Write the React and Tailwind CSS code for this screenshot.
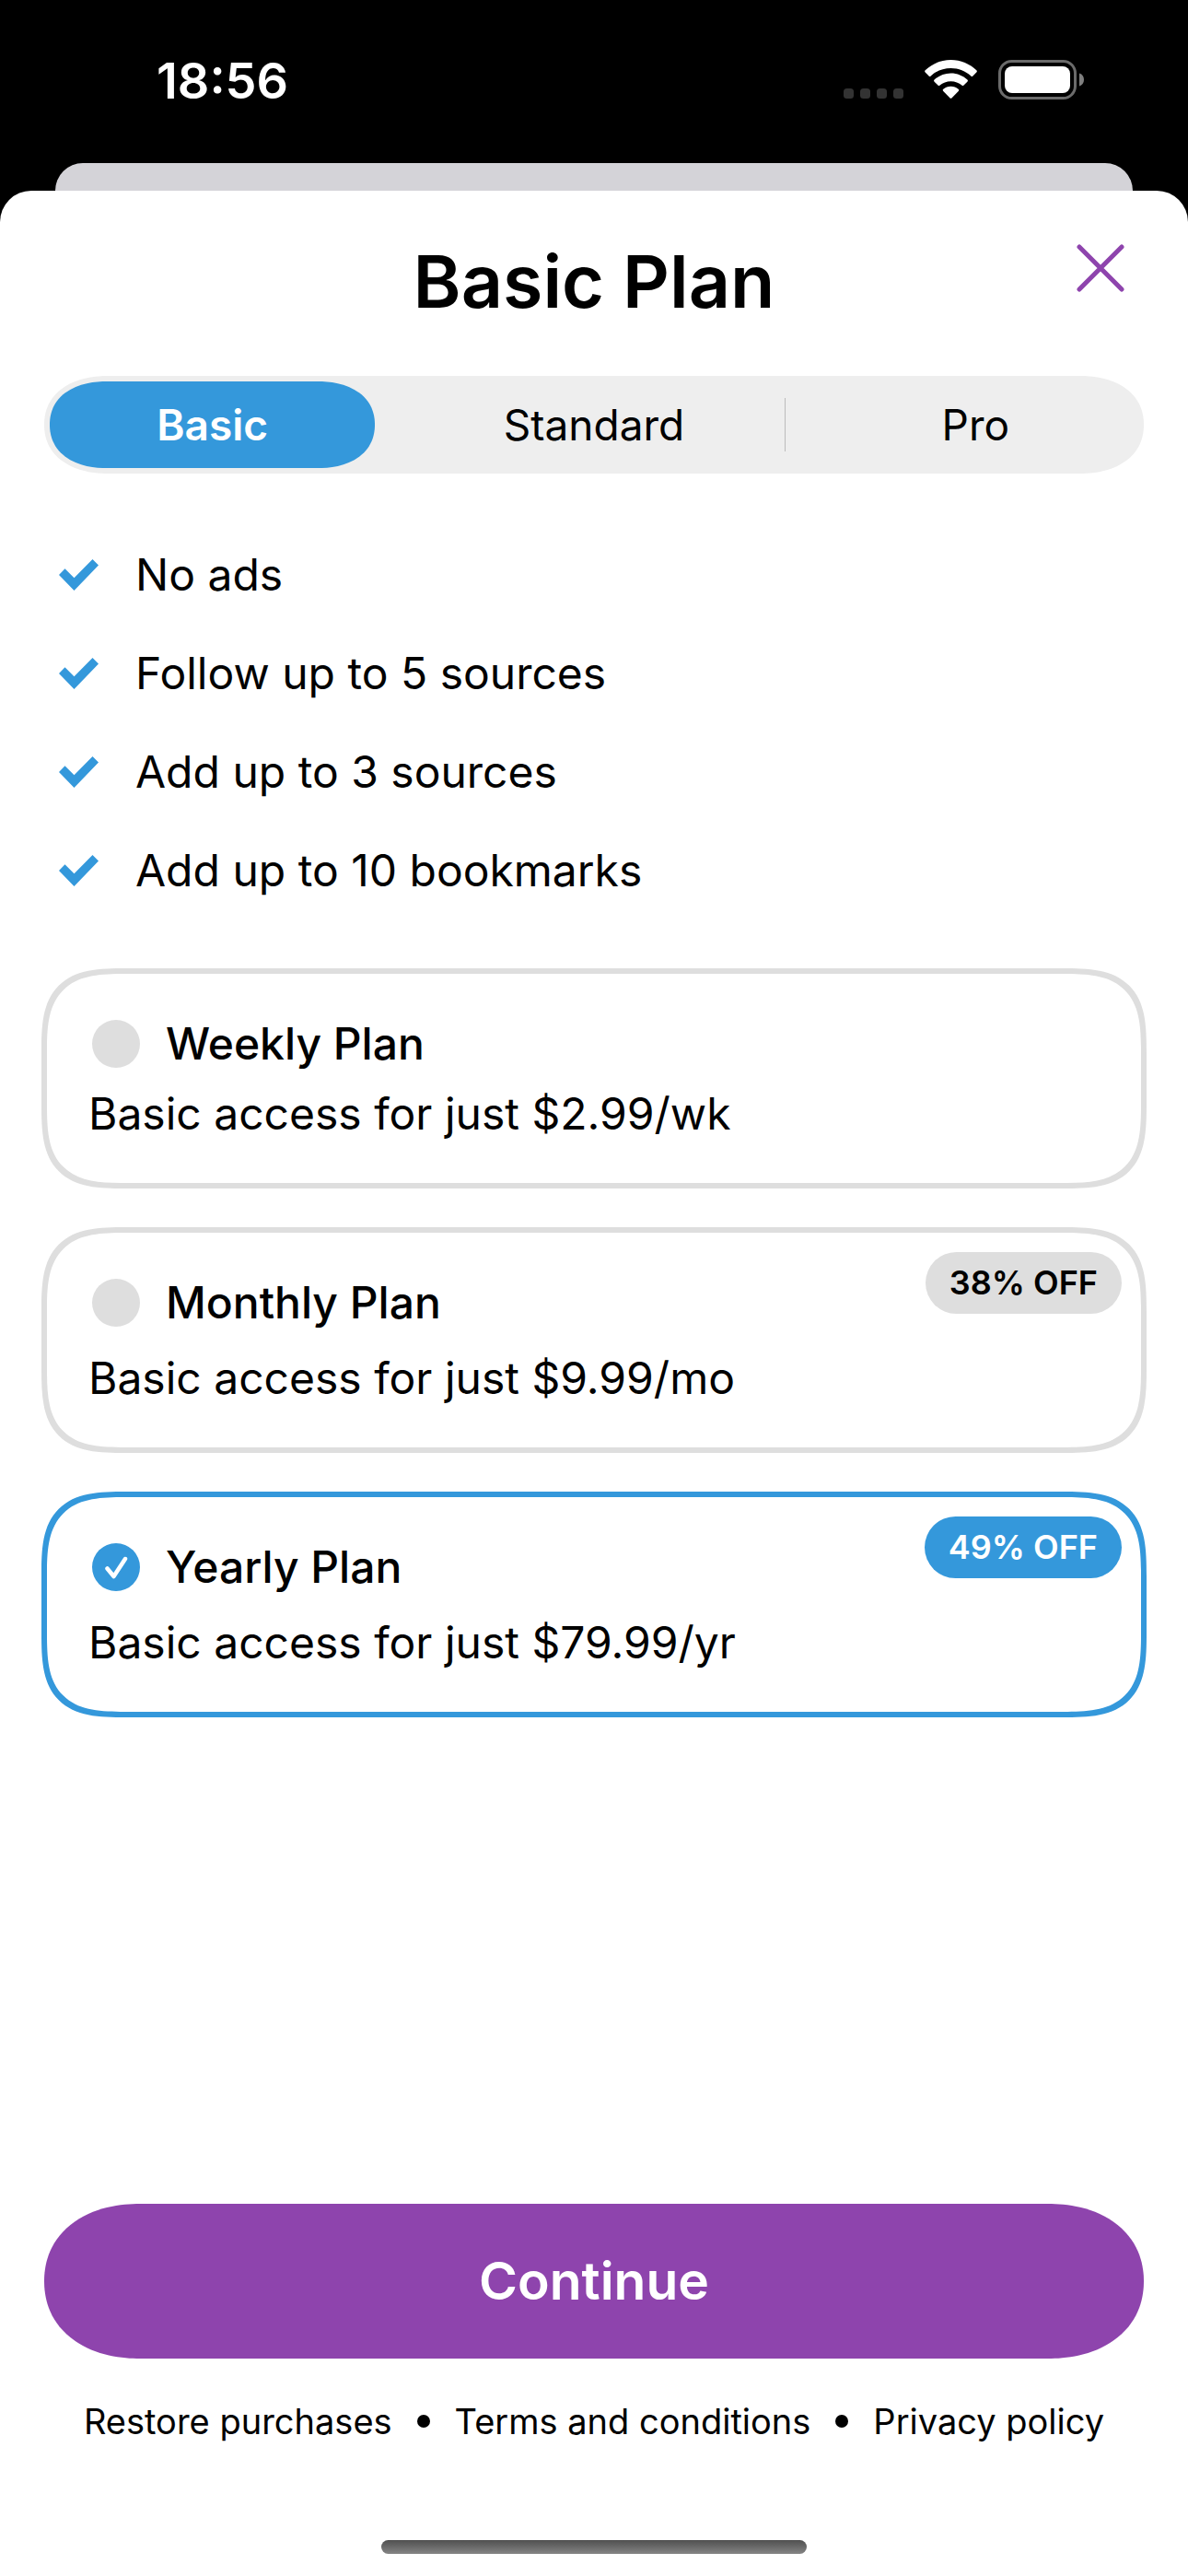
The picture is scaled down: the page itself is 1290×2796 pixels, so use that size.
import { useState } from "react";

const tabs = ["Basic", "Standard", "Pro"];

const features = [
  "No ads",
  "Follow up to 5 sources",
  "Add up to 3 sources",
  "Add up to 10 bookmarks",
];

const plans = [
  { id: "weekly", name: "Weekly Plan", text: "Basic access for just $2.99/wk" },
  { id: "monthly", name: "Monthly Plan", text: "Basic access for just $9.99/mo", badge: "38% OFF" },
  { id: "yearly", name: "Yearly Plan", text: "Basic access for just $79.99/yr", badge: "49% OFF" },
];

function StatusBar() {
  return (
    <div className="flex h-[177px] items-start justify-between pt-[58px] pr-[112px] pl-[170px] text-white">
      <time className="text-[54px] leading-[60px] font-semibold">18:56</time>
      <div className="flex items-start pt-[7px]">
        <svg className="mt-[31px] h-[11px] w-[65px]" viewBox="0 0 65 11" fill="#333333" aria-hidden="true">
          <rect x="0" width="11" height="11" rx="3.5" />
          <rect x="18" width="11" height="11" rx="3.5" />
          <rect x="36" width="11" height="11" rx="3.5" />
          <rect x="54" width="11" height="11" rx="3.5" />
        </svg>
        <svg className="ml-[23px] h-[42px] w-[57px]" viewBox="0 0 57 42" fill="currentColor" aria-hidden="true">
          <path d="M28.500 0C39.300 0 49 4.300 56.300 11.300Q57.400 12.400 56.300 13.500L52.400 17.400Q51.400 18.400 50.300 17.400C44.600 12.100 36.900 8.900 28.500 8.900S12.400 12.100 6.700 17.400Q5.600 18.400 4.600 17.400L.7 13.500Q-.4 12.400 .7 11.300C8 4.300 17.700 0 28.500 0Z" />
          <path d="M28.500 14.500C35.400 14.500 41.700 17.200 46.400 21.500Q47.500 22.600 46.400 23.700L42.500 27.600Q41.500 28.600 40.400 27.600C37.200 24.900 33.100 23.200 28.500 23.200S19.800 24.900 16.600 27.600Q15.500 28.600 14.500 27.600L10.600 23.700Q9.500 22.600 10.600 21.500C15.300 17.200 21.600 14.500 28.500 14.500Z" />
          <path d="M28.500 28.700C31.700 28.700 34.500 29.900 36.700 31.700Q37.900 32.800 36.700 34L29.600 41.200Q28.500 42.300 27.400 41.200L20.300 34Q19.100 32.800 20.300 31.700C22.500 29.900 25.300 28.700 28.500 28.700Z" />
        </svg>
        <svg className="ml-[23px] h-[43px] w-[94px]" viewBox="0 0 94 43" aria-hidden="true">
          <rect x="1.500" y="1.500" width="82" height="40" rx="13" fill="none" stroke="#6b6b6b" strokeWidth="3" />
          <rect x="7" y="7" width="71" height="29" rx="8" fill="#fff" />
          <path d="M88 14.500C91 15.500 93 18 93 21.500S91 27.500 88 28.500Z" fill="#7f7f7f" />
        </svg>
      </div>
    </div>
  );
}

function FeatureCheck() {
  return (
    <svg className="h-[34px] w-[43px]" viewBox="0 0 43 34" fill="#3498db" aria-hidden="true">
      <path d="M0 17L6.500 10.200L16.500 20.300L36.500 0L43 6.600L16.500 34Z" />
    </svg>
  );
}

function PlanCard({ plan, checked, onSelect }) {
  return (
    <label
      className={`relative block cursor-pointer rounded-[92px] border-6 px-[45px] pt-[46px] pb-[45px] [corner-shape:superellipse(1.6)] ${
        checked ? "border-[#3498db]" : "border-[#dedede]"
      }`}
    >
      <span className="flex items-center gap-7">
        <span className="grid place-items-center pl-1">
          <input
            type="radio"
            name="plan"
            value={plan.id}
            checked={checked}
            onChange={() => onSelect(plan.id)}
            className="col-start-1 row-start-1 size-[52px] appearance-none rounded-full bg-[#dedede] checked:bg-[#3498db]"
          />
          {checked && (
            <svg className="pointer-events-none col-start-1 row-start-1 size-[26px]" viewBox="0 0 26 26" fill="none" stroke="#fff" strokeWidth="4.500" strokeLinecap="round" strokeLinejoin="round" aria-hidden="true">
              <path d="M3.500 14.500L10.500 23L23 4" />
            </svg>
          )}
        </span>
        <span className="text-[48px] leading-[60px] font-medium">{plan.name}</span>
      </span>
      <span className={`block text-[48px] leading-[60px] ${plan.badge ? "mt-[22px]" : "mt-4"}`}>{plan.text}</span>
      {plan.badge && (
        <span
          className={`absolute top-[21px] right-[21px] rounded-full px-[26px] text-[36px] leading-[67px] font-semibold ${
            checked ? "bg-[#3498db] text-white" : "bg-[#dedede] text-black"
          }`}
        >
          {plan.badge}
        </span>
      )}
    </label>
  );
}

export default function App() {
  const [tab, setTab] = useState("Basic");
  const [plan, setPlan] = useState("yearly");

  return (
    <div className="flex min-h-screen flex-col bg-black font-['Inter',sans-serif] text-black">
      <StatusBar />
      <div className="mx-[60px] h-[30px] rounded-t-[30px] bg-[#d4d3d8]" />
      <main className="flex flex-1 flex-col rounded-t-[34px] bg-white">
        <header className="grid grid-cols-[1fr_auto_1fr] px-[61px] pt-[50px] pb-[55px]">
          <h1 className="col-start-2 text-[79px] leading-[96px] font-semibold">Basic Plan</h1>
          <button type="button" aria-label="Close" className="grid size-[68px] place-items-center justify-self-end">
            <svg className="size-[52px]" viewBox="0 0 52 52" fill="none" stroke="#8e44ad" strokeWidth="5" strokeLinecap="round" aria-hidden="true">
              <path d="M3 3L49 49M49 3L3 49" />
            </svg>
          </button>
        </header>

        <div role="tablist" className="mx-12 flex rounded-[70px/53px] bg-[#eeeeee] p-1.5 [corner-shape:superellipse(1.15)]">
          {tabs.map((name, i) => (
            <div key={name} className="contents">
              {i > 0 && (
                <div className="grid w-[61px] place-items-center">
                  {i > 1 && <div className="h-[58px] w-px bg-[#bbbbbb]" />}
                </div>
              )}
              <button
                type="button"
                role="tab"
                aria-selected={tab === name}
                onClick={() => setTab(name)}
                className={`flex-1 basis-0 rounded-[62px/47px] text-[46px] leading-[94px] [corner-shape:superellipse(1.15)] ${
                  tab === name ? "bg-[#3498db] font-semibold text-white" : "font-normal"
                }`}
              >
                {name}
              </button>
            </div>
          ))}
        </div>

        <ul className="mx-16 mt-14">
          {features.map((feature) => (
            <li key={feature} className="flex h-[107px] items-center gap-10 text-[48px] leading-[60px]">
              <FeatureCheck />
              {feature}
            </li>
          ))}
        </ul>

        <div role="radiogroup" aria-label="Billing period" className="mx-[45px] mt-[53px] flex flex-col gap-[42px]">
          {plans.map((item) => (
            <PlanCard key={item.id} plan={item} checked={plan === item.id} onSelect={setPlan} />
          ))}
        </div>

        <footer className="mt-auto flex flex-col px-12 pt-12 pb-6">
          <button type="button" className="h-[168px] rounded-[104px/84px] bg-[#8e44ad] text-[57px] font-semibold text-white [corner-shape:superellipse(1.12)]">
            Continue
          </button>
          <nav className="mt-11 flex items-center justify-center gap-[27px] text-[38px] leading-[48px]">
            <button type="button">Restore purchases</button>
            <span className="size-3.5 rounded-full bg-black" />
            <a href="#terms">Terms and conditions</a>
            <span className="size-3.5 rounded-full bg-black" />
            <a href="#privacy">Privacy policy</a>
          </nav>
          <div className="mx-auto mt-[105px] h-[15px] w-[462px] rounded-full bg-linear-to-b from-[#505050] to-[#858585]" />
        </footer>
      </main>
    </div>
  );
}
